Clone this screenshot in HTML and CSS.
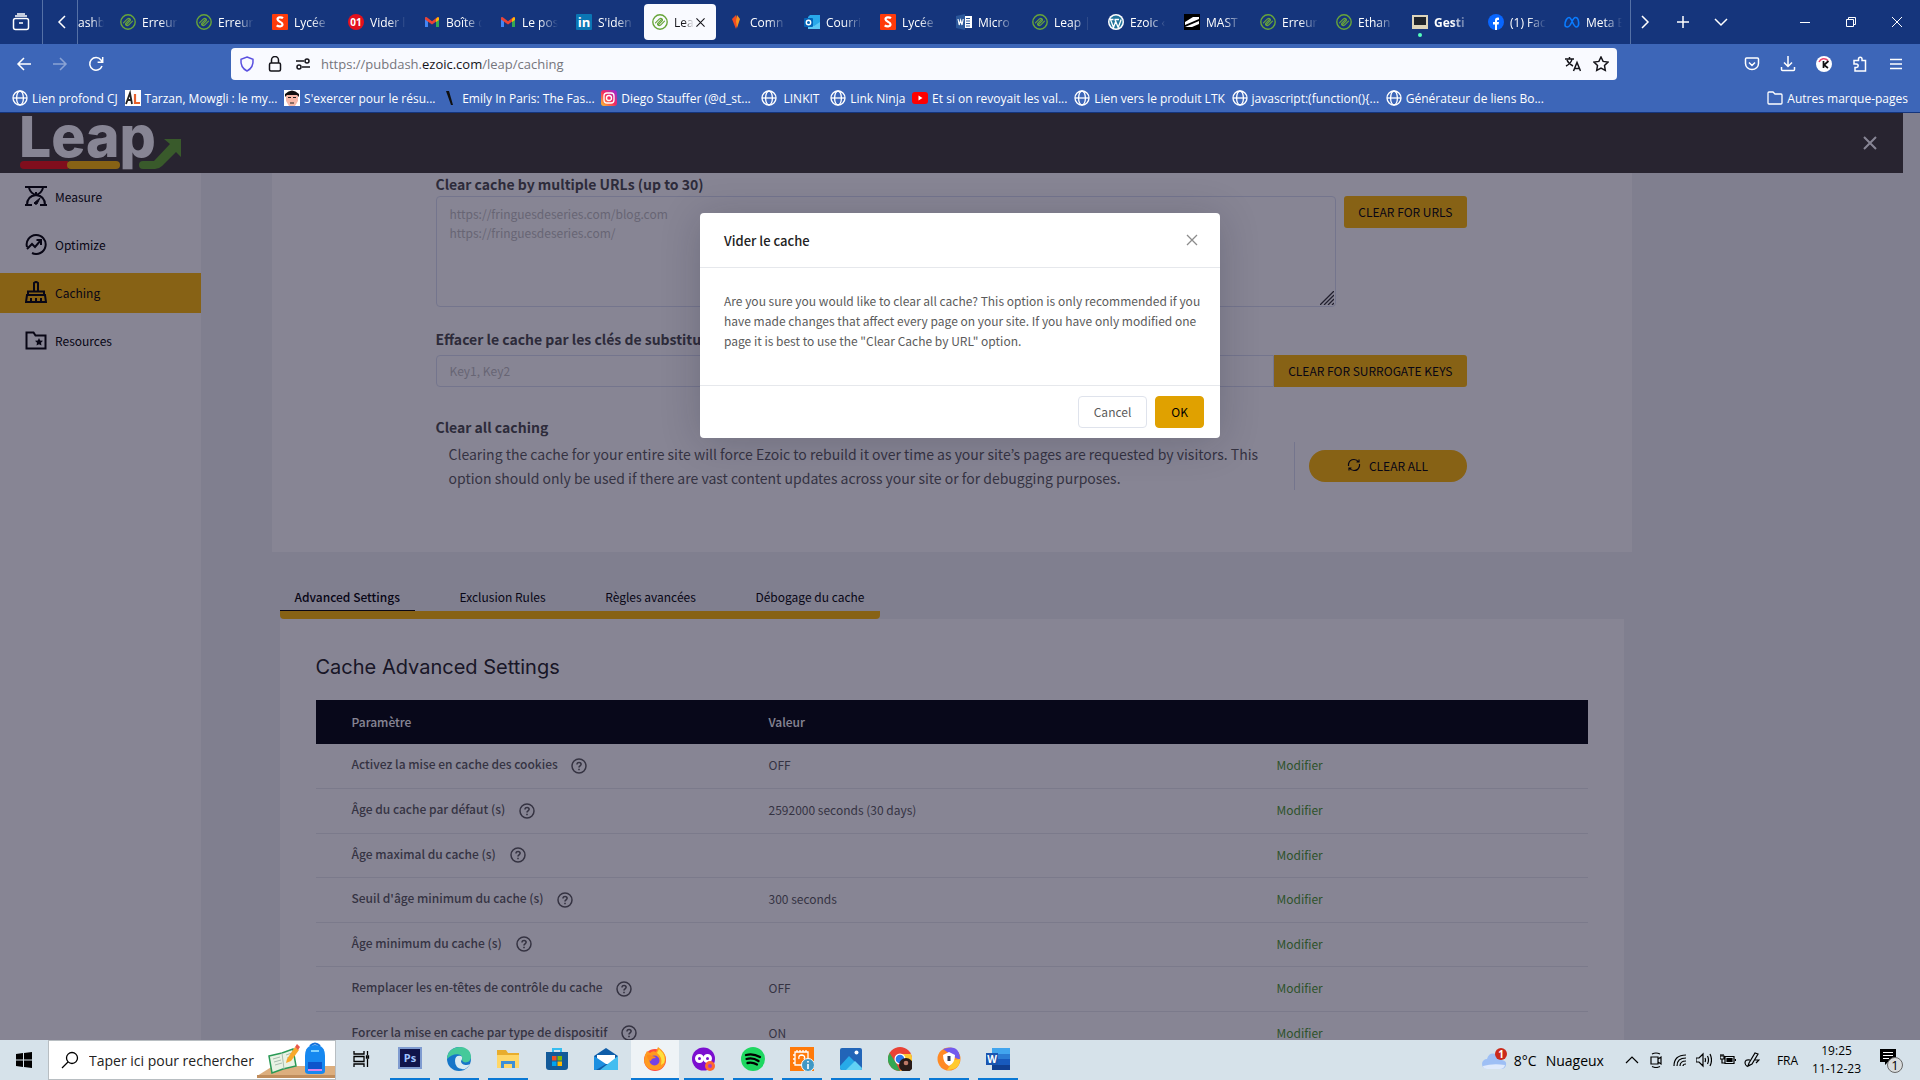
FILE: index.html
```html
<!DOCTYPE html>
<html lang="fr">
<head>
    <meta charset="UTF-8">
    <meta name="viewport" content="width=device-width, initial-scale=1.0">
    <title>Leap | Caching</title>
    <link rel="stylesheet" href="styles.css">
</head>
<body>
    <!-- shared icons -->
    <svg class="sprite" width="0" height="0" aria-hidden="true">
        <symbol id="ezoic" viewBox="0 0 16 16"><g fill="none" stroke="#68a53a" stroke-width="1.400" stroke-linecap="round"><circle cx="8" cy="8" r="7.200"/><path d="M3.500 8.800 7.400 4.900Q8.900 3.800 10 4.900T9.600 7.400L6.400 10.600M12.500 7.200 8.600 11.100Q7.100 12.200 6 11.100T6.400 8.600L9.600 5.400" stroke-width="1.200"/></g></symbol>
        <symbol id="s-red" viewBox="0 0 16 16"><rect width="16" height="16" rx="1" fill="#ff3b0a"/><path d="M11 4.200C9.500 3 5.500 2.800 5.500 5.300c0 2.500 5 2.300 5 5 0 2.600-4 2.500-5.800 1" fill="none" stroke="#fff" stroke-width="2.200"/></symbol>
        <symbol id="gmail" viewBox="0 0 16 16"><path d="M1 3v10h3V7z" fill="#4285f4"/><path d="M15 3v10h-3V7z" fill="#34a853"/><path d="M1 3.500 2.500 3 8 7.200 13.500 3l1.500.5v2L8 10.600 1 5.500z" fill="#ea4335"/><path d="m12 5 2-2 1 1v2l-3 2z" fill="#fbbc04"/></symbol>
        <symbol id="word" viewBox="0 0 16 16"><path d="M7 2h9v12H7z" fill="#fff"/><path d="M10 4.500h4M10 7h4M10 9.500h4M10 12h4" stroke="#2b579a"/><path d="m0 2 9-2v16l-9-2z" fill="#2b579a"/><path d="m2 5 1.200 6 1.400-5L6 11l1.200-6" fill="none" stroke="#fff" stroke-width="1.100"/></symbol>
        <symbol id="globe" viewBox="0 0 16 16"><g fill="none" stroke="#fff" stroke-width="1.300"><circle cx="8" cy="8" r="7"/><ellipse cx="8" cy="8" rx="3.400" ry="7"/><path d="M1 8h14"/></g></symbol>
        <symbol id="help" viewBox="0 0 16 16"><circle cx="8" cy="8" r="7" fill="none" stroke="currentColor" stroke-width="1.500"/><path d="M6 6.400C6 3.800 10.100 4 10.100 6.300 10.100 7.800 8 7.800 8 9.400M8 10.700v1.500" fill="none" stroke="currentColor" stroke-width="1.600"/></symbol>
        <symbol id="cross" viewBox="0 0 16 16"><path d="m3 3 10 10M13 3 3 13" fill="none" stroke="currentColor" stroke-width="1.300"/></symbol>
    </svg>

    <header class="browser">
        <div class="tab-strip">
            <button class="strip-btn first" aria-label="Firefox View"><svg width="18" height="18" viewBox="0 0 18 18" fill="none" stroke="#fff" stroke-width="1.500"><rect x="1.500" y="5.500" width="15" height="11" rx="2"/><path d="M3 3h12M5 1h8M7 10h4"/></svg></button>
            <button class="strip-btn second" aria-label="Précédent"><svg width="16" height="16" viewBox="0 0 16 16" fill="none" stroke="#fff" stroke-width="1.500"><path d="M11 2 5 8l6 6"/></svg></button>
            <div class="tab partial"><span>ashb</span></div>
            <div class="tab"><svg><use href="#ezoic"/></svg><span>Erreur</span></div>
            <div class="tab"><svg><use href="#ezoic"/></svg><span>Erreur</span></div>
            <div class="tab"><svg><use href="#s-red"/></svg><span>Lycée</span></div>
            <div class="tab"><svg viewBox="0 0 16 16"><circle cx="8" cy="8" r="8" fill="#e4101c"/><text x="8" y="12" text-anchor="middle" class="ico-text">01</text></svg><span>Vider l</span></div>
            <div class="tab"><svg><use href="#gmail"/></svg><span>Boîte d</span></div>
            <div class="tab"><svg><use href="#gmail"/></svg><span>Le pos</span></div>
            <div class="tab"><svg viewBox="0 0 16 16"><rect width="16" height="16" rx="1" fill="#0a76b4"/><text x="8" y="13" text-anchor="middle" class="ico-text big">in</text></svg><span>S'iden</span></div>
            <div class="tab active"><svg><use href="#ezoic"/></svg><span>Lea</span><button class="tab-close" aria-label="Fermer l'onglet"><svg width="13" height="13"><use href="#cross"/></svg></button></div>
            <div class="tab"><svg viewBox="0 0 16 16"><path d="M8 1 4 5l4 10 2-6z" fill="#f04a23"/><path d="m9 1 3 4-3 9-1-7z" fill="#f7931e"/></svg><span>Comn</span></div>
            <div class="tab"><svg viewBox="0 0 16 16"><path d="M6 1h10v14H4V3z" fill="#28a8ea"/><path d="m4 10 6 2 6-4v7H4z" fill="#5cc8f5"/><rect y="4" width="9" height="9" rx="1" fill="#0364b8"/><circle cx="4.500" cy="8.500" r="2.200" fill="none" stroke="#fff" stroke-width="1.400"/></svg><span>Courri</span></div>
            <div class="tab"><svg><use href="#s-red"/></svg><span>Lycée</span></div>
            <div class="tab"><svg><use href="#word"/></svg><span>Micro</span></div>
            <div class="tab"><svg><use href="#ezoic"/></svg><span>Leap |</span></div>
            <div class="tab"><svg viewBox="0 0 16 16"><circle cx="8" cy="8" r="8" fill="#fff"/><circle cx="8" cy="8" r="6.500" fill="#21759b"/><path d="m2.500 5.500 3 8 2.200-6-.8-2m.8 2 2.500 6 3-8M2 5.500h3.500m1 0H11" fill="none" stroke="#fff" stroke-width="1.300"/></svg><span>Ezoic ‹</span></div>
            <div class="tab"><svg viewBox="0 0 16 16"><path d="M0 0h16v16H0z" fill="#000"/><path d="M1 8 9 3h6v2L1 11zM1 13l14-6v3L8 13z" fill="#fff"/></svg><span>MAST</span></div>
            <div class="tab"><svg><use href="#ezoic"/></svg><span>Erreur</span></div>
            <div class="tab"><svg><use href="#ezoic"/></svg><span>Ethan</span></div>
            <div class="tab playing"><svg viewBox="0 0 16 16"><path d="M0 1h16v14H0z" fill="#ddd4bb"/><path d="M2 3h12v8H2z" fill="#20242b"/></svg><span>Gesti</span></div>
            <div class="tab"><svg viewBox="0 0 16 16"><circle cx="8" cy="8" r="8" fill="#0866ff"/><path d="M7 16v-5.500H5V8h2V6.500C7 4 8.500 3.300 11 3.700V6c-1.500-.1-2 .1-2 1v1h2l-.4 2.500H9V16z" fill="#fff"/></svg><span>(1) Fac</span></div>
            <div class="tab"><svg viewBox="0 0 16 16"><path d="M1 11C1 7 3 3.500 5 3.500 8 3.500 9 13 12.500 13 16 13 15 3.500 11.500 3.500 8 3.500 7.500 13 3.500 13 2 13 1 12.500 1 11z" fill="none" stroke="#0a7cff" stroke-width="1.600"/></svg><span>Meta E</span></div>
            <div class="strip-end">
                <button aria-label="Onglets suivants"><svg width="16" height="16" viewBox="0 0 16 16"><path d="m5 2 6 6-6 6"/></svg></button>
                <button aria-label="Nouvel onglet"><svg width="16" height="16" viewBox="0 0 16 16"><path d="M8 2v12M2 8h12"/></svg></button>
                <button aria-label="Lister les onglets"><svg width="16" height="16" viewBox="0 0 16 16"><path d="m2 5 6 6 6-6"/></svg></button>
            </div>
            <div class="window-btns">
                <button aria-label="Réduire"><svg width="12" height="12" viewBox="0 0 12 12"><path d="M1 6.500h10"/></svg></button>
                <button aria-label="Restaurer"><svg width="12" height="12" viewBox="0 0 12 12"><path d="M1.500 3.500h7v7h-7zM3.500 3V1.500h7v7H9"/></svg></button>
                <button aria-label="Fermer"><svg width="12" height="12" viewBox="0 0 12 12"><path d="m1 1 10 10M11 1 1 11"/></svg></button>
            </div>
        </div>

        <div class="nav-bar">
            <div class="nav-left">
                <button aria-label="Page précédente"><svg width="16" height="16" viewBox="0 0 16 16"><path d="M15 8H2m6-6L2 8l6 6"/></svg></button>
                <button class="disabled" aria-label="Page suivante"><svg width="16" height="16" viewBox="0 0 16 16"><path d="M1 8h13M8 2l6 6-6 6"/></svg></button>
                <button aria-label="Actualiser"><svg width="16" height="16" viewBox="0 0 16 16"><path d="M14 10a6.300 6.300 0 1 1-1-6l1.500 2M14.700 1v5.200H9.600"/></svg></button>
            </div>
            <div class="url-bar">
                <svg width="16" height="16" viewBox="0 0 16 16" stroke="#5a50e0"><path d="M8 1 14 3.300c.5 5-1.500 9.500-6 11.700-4.500-2.200-6.500-6.700-6-11.700z"/></svg>
                <svg width="16" height="16" viewBox="0 0 16 16"><rect x="2.500" y="7" width="11" height="8" rx="1.500"/><path d="M4.500 7V4a3.500 3.500 0 0 1 7 0v3"/></svg>
                <svg width="16" height="16" viewBox="0 0 16 16"><circle cx="12" cy="5" r="2"/><path d="M1 5h8M7 11h8"/><circle cx="4" cy="11" r="2"/></svg>
                <div class="url">https://pubdash.<b>ezoic.com</b>/leap/caching</div>
                <button aria-label="Traduire la page"><svg width="16" height="16" viewBox="0 0 16 16"><path d="M0 3h9M4.500 1v2M7 3c-.5 3-3 5.500-6 7M2 4c1 2.500 3 4.500 6 6M8.500 15 12 6.500 15.500 15M9.700 12.500h4.600"/></svg></button>
                <button aria-label="Ajouter aux favoris"><svg width="16" height="16" viewBox="0 0 16 16"><path d="m8 1 2.100 4.400 4.900.7-3.500 3.400.8 4.900L8 12.100l-4.300 2.300.8-4.900L1 6.100l4.900-.7z"/></svg></button>
            </div>
            <div class="nav-right">
                <button aria-label="Pocket"><svg width="16" height="16" viewBox="0 0 16 16"><path d="M2.500 2h11q1 0 1 1v4.500a6.500 6 0 0 1-13 0V3q0-1 1-1zM5 6.500l3 3 3-3"/></svg></button>
                <button aria-label="Téléchargements"><svg width="16" height="16" viewBox="0 0 16 16"><path d="M8 0v10M4 6.500l4 4 4-4M1.500 11v2.500q0 1 1 1h11q1 0 1-1V11"/></svg></button>
                <button aria-label="Extension K"><svg width="16" height="16" viewBox="0 0 16 16"><circle cx="8" cy="8" r="8" fill="#fff" stroke="none"/><path d="M3 6c1.500-3.500 6-4.500 9-1.500" stroke="#ef476f"/><path d="M7.500 5v7M12.500 5 8 9l4 3" stroke="#111" stroke-width="1.700"/></svg></button>
                <button aria-label="Extensions"><svg width="16" height="16" viewBox="0 0 16 16"><path d="M5 4.500h1.500V3a1.700 1.700 0 0 1 3.500 0v1.500h3.500V15H3v-3.500h1.500a1.700 1.700 0 0 0 0-3.400H2V4.500z"/></svg></button>
                <button aria-label="Menu"><svg width="16" height="16" viewBox="0 0 16 16"><path d="M2 3.500h12M2 8h12M2 12.500h12"/></svg></button>
            </div>
        </div>

        <nav class="bookmarks">
            <div class="bookmark-list">
                <a href="#"><svg><use href="#globe"/></svg>Lien profond CJ</a>
                <a href="#"><svg viewBox="0 0 16 16"><path d="M0 0h16v16H0z" fill="#fff"/><path d="m1 14 4-11 2 11M2.500 10H7" fill="none" stroke="#222" stroke-width="1.800"/><path d="M10 4v9h5" fill="none" stroke="#e8622c" stroke-width="2.200"/></svg>Tarzan, Mowgli : le my...</a>
                <a href="#"><svg viewBox="0 0 16 16"><path d="M0 0h16v16H0z" fill="#fff"/><path d="M2 4h12v7l-3 5H5l-3-5z" fill="#f5b8a8"/><path d="M1 4Q8-3 15 4v3l-2-2H3L1 7z" fill="#111"/><path d="M4 7.500h3m2 0h3M6 13h4" stroke="#222"/></svg>S'exercer pour le résu...</a>
                <a href="#"><svg viewBox="0 0 16 16"><path d="M4 1h3l4 14H9z" fill="#101010"/></svg>Emily In Paris: The Fas...</a>
                <a href="#"><svg viewBox="0 0 16 16"><defs><linearGradient id="ig" x1="0" y1="1" x2="1" y2="0"><stop offset="0" stop-color="#fdc52c"/><stop offset=".5" stop-color="#f5285f"/><stop offset="1" stop-color="#8a2be2"/></linearGradient></defs><rect width="16" height="16" rx="3" fill="url(#ig)"/><g fill="none" stroke="#fff" stroke-width="1.300"><rect x="3" y="3" width="10" height="10" rx="3"/><circle cx="8" cy="8" r="2.500"/></g></svg>Diego Stauffer (@d_st...</a>
                <a href="#" class="short"><svg><use href="#globe"/></svg>LINKIT</a>
                <a href="#"><svg><use href="#globe"/></svg>Link Ninja</a>
                <a href="#"><svg viewBox="0 0 16 16"><rect y="2" width="16" height="12" rx="3" fill="#f00"/><path d="m6.500 5.500 4 2.500-4 2.500z" fill="#fff"/></svg>Et si on revoyait les val...</a>
                <a href="#"><svg><use href="#globe"/></svg>Lien vers le produit LTK</a>
                <a href="#"><svg><use href="#globe"/></svg>javascript:(function(){...</a>
                <a href="#"><svg><use href="#globe"/></svg>Générateur de liens Bo...</a>
            </div>
            <a href="#"><svg viewBox="0 0 16 16"><path d="M1 13V3q0-1 1-1h4l2 2h6q1 0 1 1v8q0 1-1 1H2q-1 0-1-1z" fill="none" stroke="#fff" stroke-width="1.300"/></svg>Autres marque-pages</a>
        </nav>
    </header>

    <div class="viewport">
        <div class="leap-header">
            <svg class="logo" width="164" height="58" viewBox="0 0 164 58" role="img" aria-label="Leap">
                <text x="-1" y="43" class="logo-text">Leap</text>
                <path d="M4 47h44v8H4a4 4 0 0 1 0-8z" fill="#f01010"/>
                <rect x="47" y="47" width="53" height="8" rx="4" fill="#ffb800"/>
                <path d="M123 47h11l16-17-6-5h17v18l-5-5-14 14q-3 3-7 3h-12a4 4 0 0 1 0-8z" fill="#62a82c"/>
            </svg>
            <button class="leap-close" aria-label="Fermer"><svg width="20" height="20" viewBox="0 0 20 20"><path d="m4 4 12 12M16 4 4 16" stroke="#fff" stroke-width="2"/></svg></button>
        </div>

        <div class="layout">
            <nav class="sidebar">
                <a href="#"><svg width="22" height="22" viewBox="0 0 22 22"><path d="M0 2h22M0 20h7m8 0h7M4 3q2 6 7 7 5-1 7-7M2 20q0-9 9-10 9 1 9 10M11 10V7"/><path d="m9 18 6-5-3 6q-2 1-3-1z" fill="#000" stroke-width="1"/></svg>Measure</a>
                <a href="#"><svg width="22" height="22" viewBox="0 0 22 22"><path d="M2 14a9.500 9.500 0 1 1 5 6M2 16l5-5 3 3 6-7M11.500 7H16v5"/></svg>Optimize</a>
                <a href="#" class="current"><svg width="22" height="22" viewBox="0 0 22 22"><path d="M9 10V2q2-2 4 0v8M3 14v-3.500h16V14M2 14h18l1 7H1zM6 21v-4m5 4v-4m5 4v-4"/></svg>Caching</a>
                <a href="#"><svg width="22" height="22" viewBox="0 0 22 22"><path d="M1.500 3.500h7l2 3h10v13h-19z"/><path d="m14 9 1.200 2.500 2.800.3-2 1.900.5 2.800-2.500-1.300-2.500 1.300.5-2.800-2-1.900 2.800-.3z" fill="#000" stroke="none"/></svg>Resources</a>
            </nav>

            <main class="content">
                <section class="card cache-card">
                    <label class="field-title" for="urls">Clear cache by multiple URLs (up to 30)</label>
                    <div class="url-row">
                        <div class="textarea-wrap">
                            <textarea id="urls" placeholder="https://fringuesdeseries.com/blog.com&#10;https://fringuesdeseries.com/"></textarea>
                            <svg class="grip" width="14" height="14" viewBox="0 0 14 14"><path d="M0 14 14 0M4 14 14 4M8 14l6-6M12 14l2-2" stroke="#333" fill="none" stroke-width="1.300"/></svg>
                        </div>
                        <button class="btn">CLEAR FOR URLS</button>
                    </div>
                    <label class="field-title" for="keys">Effacer le cache par les clés de substitution</label>
                    <div class="key-row">
                        <input type="text" id="keys" placeholder="Key1, Key2">
                        <button class="btn">CLEAR FOR SURROGATE KEYS</button>
                    </div>
                    <h2 class="field-title">Clear all caching</h2>
                    <div class="all-row">
                        <p>Clearing the cache for your entire site will force Ezoic to rebuild it over time as your site’s pages are requested by visitors. This option should only be used if there are vast content updates across your site or for debugging purposes.</p>
                        <button class="btn round"><svg width="14" height="14" viewBox="0 0 14 14" fill="none" stroke="#000" stroke-width="1.200"><path d="M1.500 8V6q1-4.500 5.500-4.500 3 0 4.500 2.500M12.500 6v2q-1 4.500-5.500 4.500-3 0-4.500-2.500M12 1.500V4H9.500M2 12.500V10h2.500"/></svg>CLEAR ALL</button>
                    </div>
                </section>

                <section class="settings">
                    <div class="tabs">
                        <button class="selected">Advanced Settings</button>
                        <button>Exclusion Rules</button>
                        <button>Règles avancées</button>
                        <button>Débogage du cache</button>
                    </div>
                    <div class="card table-card">
                        <h1>Cache Advanced Settings</h1>
                        <table>
                            <thead>
                                <tr><th>Paramètre</th><th>Valeur</th><th></th></tr>
                            </thead>
                            <tbody>
                                <tr><th>Activez la mise en cache des cookies <svg><use href="#help"/></svg></th><td>OFF</td><td><a href="#">Modifier</a></td></tr>
                                <tr><th>Âge du cache par défaut (s) <svg><use href="#help"/></svg></th><td>2592000 seconds (30 days)</td><td><a href="#">Modifier</a></td></tr>
                                <tr><th>Âge maximal du cache (s) <svg><use href="#help"/></svg></th><td></td><td><a href="#">Modifier</a></td></tr>
                                <tr><th>Seuil d'âge minimum du cache (s) <svg><use href="#help"/></svg></th><td>300 seconds</td><td><a href="#">Modifier</a></td></tr>
                                <tr><th>Âge minimum du cache (s) <svg><use href="#help"/></svg></th><td></td><td><a href="#">Modifier</a></td></tr>
                                <tr><th>Remplacer les en-têtes de contrôle du cache <svg><use href="#help"/></svg></th><td>OFF</td><td><a href="#">Modifier</a></td></tr>
                                <tr><th>Forcer la mise en cache par type de dispositif <svg><use href="#help"/></svg></th><td>ON</td><td><a href="#">Modifier</a></td></tr>
                            </tbody>
                        </table>
                    </div>
                </section>
            </main>
        </div>

        <div class="modal-mask">
            <div class="modal" role="dialog" aria-labelledby="modalTitle">
                <div class="modal-header">
                    <h3 id="modalTitle">Vider le cache</h3>
                    <button aria-label="Fermer"><svg width="16" height="16"><use href="#cross"/></svg></button>
                </div>
                <div class="modal-body">Are you sure you would like to clear all cache? This option is only recommended if you have made changes that affect every page on your site. If you have only modified one page it is best to use the "Clear Cache by URL" option.</div>
                <div class="modal-footer">
                    <button class="cancel">Cancel</button>
                    <button class="ok">OK</button>
                </div>
            </div>
        </div>
    </div>

    <footer class="taskbar">
        <button class="start" aria-label="Démarrer"><svg width="16" height="16" viewBox="0 0 16 16"><path d="m0 2 7-1v6.500H0zM8 1l8-1v7.500H8zM0 8.500h7V15l-7-1zM8 8.500h8V16l-8-1z"/></svg></button>
        <div class="search">
            <svg width="18" height="18" viewBox="0 0 18 18" fill="none" stroke="#000" stroke-width="1.300"><circle cx="11" cy="7" r="5.500"/><path d="m7 11-6 6"/></svg>
            <input type="text" aria-label="Rechercher" placeholder="Taper ici pour rechercher">
            <svg class="doodle" width="78" height="36" viewBox="0 0 78 36"><path d="m0 34 16-10h62v12H0z" fill="#dcae7e"/><path d="M0 33h78v3H0z" fill="#c08d5c"/><path d="m12 14 13-3 11-4 3 17-13 3-11 4z" fill="#e9f2e4" stroke="#2a9a56" stroke-width="1.500"/><path d="m25 11 2 16M16 17l7-2m-6 5 7-2m-6 5 7-2m4-8 6-2m-5 5 6-2" stroke="#a9bdb0" fill="none"/><path d="m30 17 8-12 4 3-8 11-5 2z" fill="#f8a92c"/><path d="m38 5 2-3 3 3-2 3z" fill="#e8584a"/><path d="M53 4q5-5 10 0" fill="none" stroke="#1570d8" stroke-width="2"/><path d="M48 14q0-11 10-11t10 11v15q0 3-4 3H52q-4 0-4-3z" fill="#1688f0"/><path d="M51 20h14v9H51z" fill="#0d55cc"/><path d="M54 9h8" stroke="#7fd0ff" stroke-width="2"/><path d="M51 28h14" stroke="#d784ee" stroke-width="2"/></svg>
        </div>
        <div class="apps">
            <button aria-label="Affichage des tâches"><svg viewBox="0 0 24 24"><path d="M5 4v3h10V4M5 20v-3h10v3M5 9.500h10v5H5zM18.500 4v4m0 4v8M17.500 9h2v2h-2z" fill="none" stroke="#000" stroke-width="1.300"/></svg></button>
            <button class="open" aria-label="Photoshop"><svg viewBox="0 0 24 24"><path d="M1 1h22v20H1z" fill="#10144b" stroke="#7f9bd0" stroke-width="2"/><text x="12" y="15" text-anchor="middle" class="ico-text ps">Ps</text></svg></button>
            <button class="open" aria-label="Edge"><svg viewBox="0 0 24 24"><circle cx="12" cy="12" r="12" fill="#1676c8"/><path d="M0 12C0-3 24-4 24 10c0 6-8 7-9 3 2-7-9-8-15-1z" fill="#45c99a"/><path d="M8 14q0-6 6-5c2 1 1 4 0 5 0 4 6 5 9 3-2 4-6 6-8 5q-7-1-7-8z" fill="#d8eaf2"/></svg></button>
            <button class="open" aria-label="Explorateur"><svg viewBox="0 0 24 24"><path d="M1 3h9l2 3h11v15H1z" fill="#e8ad2e"/><path d="M1 8h22v13H1z" fill="#ffd768"/><path d="M5 21v-7h14v7h-3v-4H8v4z" fill="#3d8fd8"/></svg></button>
            <button aria-label="Microsoft Store"><svg viewBox="0 0 24 24"><path d="M8 6V2h8v4" fill="none" stroke="#35bdf0" stroke-width="2"/><path d="M1 5h22v15q0 3-3 3H4q-3 0-3-3z" fill="#135a99"/><path d="M7 9h4.500v4.500H7z" fill="#f25022"/><path d="M12.500 9H17v4.500h-4.500z" fill="#7fba00"/><path d="M7 14.500h4.500V19H7z" fill="#00a4ef"/><path d="M12.500 14.500H17V19h-4.500z" fill="#ffb900"/></svg></button>
            <button aria-label="Courrier"><svg viewBox="0 0 24 24"><path d="M0 9 12 1l12 8v14H0z" fill="#0f5da8"/><path d="M3 8h18v9H3z" fill="#fff"/><path d="m0 9 12 8-10 6H0z" fill="#1c8fe0"/><path d="m24 9-18 14h18z" fill="#42bdf0"/></svg></button>
            <button class="open focused" aria-label="Firefox"><svg viewBox="0 0 24 24"><circle cx="12" cy="13" r="11" fill="#ff4a3d"/><path d="M2 8 4 4l3 2q3-3 6-1l2-5q10 7 7 16-2 6-8 7-11 1-13-9z" fill="#ff9a20"/><path d="M16 2q8 7 5 14l-3 2q2-8-4-12z" fill="#ffdf3e"/><circle cx="11.500" cy="13.500" r="5" fill="#7542e5"/><path d="M4 8q3-1 5 1 3 0 4 2-5 0-5 3-4-1-4-6z" fill="#ff8a1c"/></svg></button>
            <button class="open" aria-label="Firefox privé"><svg viewBox="0 0 24 24"><circle cx="11.500" cy="12" r="11.500" fill="#7c0fd0"/><circle cx="7.500" cy="11.500" r="3" fill="none" stroke="#fff" stroke-width="3"/><circle cx="15.500" cy="11.500" r="3" fill="none" stroke="#fff" stroke-width="3"/><circle cx="18" cy="19" r="5" fill="#ff6a2e"/><circle cx="18" cy="19" r="2" fill="#a63bd0"/></svg></button>
            <button class="open" aria-label="Spotify"><svg viewBox="0 0 24 24"><circle cx="12" cy="12" r="12" fill="#1ed760"/><path d="M5 8q7-2 14 2M5.500 12q6-2 12 2M6.500 16q5-1 9.500 1.500" fill="none" stroke="#000" stroke-width="2.300" stroke-linecap="round"/></svg></button>
            <button class="open" aria-label="Informations système"><svg viewBox="0 0 24 24"><path d="M0 0h24v24H0z" fill="#ff7a0a"/><path d="M5 5h13v13H5zM7 3v2m3-2v2m3-2v2m3-2v2M3 8h2m-2 4h2m-2 4h2M9 12q-1-4 3-4 4 1 2 4" fill="none" stroke="#fff" stroke-width="1.300"/><circle cx="18" cy="18" r="6.500" fill="#4098c4" stroke="#fff"/><path d="M18 14v1.500m0 1.500v5" stroke="#fff" stroke-width="1.600"/></svg></button>
            <button class="open" aria-label="Photos"><svg viewBox="0 0 24 24"><rect x="1" y="1" width="22" height="22" rx="2" fill="#2265b8"/><path d="m1 19 9-10 13 13q-1 1-2 1H3q-2 0-2-2z" fill="#27aae8"/><path d="m7 23 9-9 7 7q0 2-2 2z" fill="#62d2f5"/><circle cx="17.500" cy="5.500" r="2" fill="#fff"/></svg></button>
            <button class="open" aria-label="Chrome"><svg viewBox="0 0 24 24"><circle cx="12" cy="12" r="12" fill="#e94235"/><path d="M1.600 6 8 16l4 8A12 12 0 0 1 1.600 6z" fill="#33a852"/><path d="M12 7h11a12 12 0 0 1-11 17l5-9z" fill="#fcc934"/><circle cx="12" cy="12" r="5.500" fill="#fff"/><circle cx="12" cy="12" r="4.300" fill="#2a78ea"/><circle cx="18" cy="18" r="7" fill="#281b18"/><circle cx="18" cy="16" r="2.300" fill="#bd7966"/></svg></button>
            <button class="open" aria-label="Avast Secure Browser"><svg viewBox="0 0 24 24"><circle cx="12" cy="12" r="11.500" fill="#ff8a24"/><path d="M6 2q17-6 17 11l-6-3z" fill="#7359ee"/><path d="M23 12q0 11-13 11l7-10z" fill="#ffca2e"/><path d="m12 5 6 3q0 8-6 11-6-3-6-11z" fill="#fff"/><path d="M12 9v5" stroke="#333c55" stroke-width="3"/></svg></button>
            <button class="open" aria-label="Word"><svg viewBox="0 0 24 24"><path d="M6 1h18v22H6z" fill="#185abd"/><path d="M6 1h18v6H6z" fill="#41a5ee"/><path d="M6 7h18v5H6z" fill="#2b7cd3"/><path d="M6 18h18v5H6z" fill="#103f91"/><path d="M0 6h12v12H0z" fill="#1a55b0"/><text x="6" y="16" text-anchor="middle" class="ico-text w">W</text></svg></button>
        </div>
        <div class="tray">
            <svg class="weather" width="28" height="24" viewBox="0 0 28 24"><path d="M5 21a5 5 0 0 1 0-10q2-7 9-5 5 1 6 6 5 1 4 5-1 4-5 4z" fill="#9ebff5"/><path d="M5 21q-4 0-4-3 10-3 22-1-1 4-5 4z" fill="#dfeafc"/><circle cx="19" cy="6" r="6" fill="#cb2a1b"/><text x="19" y="10" text-anchor="middle" class="ico-text badge">1</text></svg>
            <span class="temp">8°C</span>
            <span class="sky">Nuageux</span>
            <div class="tray-icons">
                <svg viewBox="0 0 16 16"><path d="m2 11 6-6 6 6"/></svg>
                <svg viewBox="0 0 16 16"><path d="M3 5h7v7H3zM10 7l3-2v7l-3-2M4 2q4-2 8 0M4 14.500q4 2 8 0"/></svg>
                <svg viewBox="0 0 16 16"><path d="M2 14Q2 3 14 3M5 14q0-8 9-8M8 14q0-5 6-5M11 14q0-2 3-2"/></svg>
                <svg viewBox="0 0 16 16"><path d="M0 6h3l4-4v12l-4-4H0zM9 6q1 2 0 4M11.500 4q2 4 0 8M14 2q3 6 0 12"/></svg>
                <svg viewBox="0 0 16 16"><path d="M5 4.500h9v7H5zM15.500 7v2M0 4h4v3H0zM1 2v2m2-2v2M2 7v4h3"/><path d="M7 6.500h5v3H7z" fill="#000"/></svg>
                <svg viewBox="0 0 16 16"><path d="M5 11 11 1l3 1-6 10-4 2zM6 8q-5-1-5 3 1 5 5 2M10 8h5l-3 3"/></svg>
            </div>
            <span class="lang">FRA</span>
            <div class="clock"><span>19:25</span><span>11-12-23</span></div>
            <svg class="notif" width="26" height="26" viewBox="0 0 26 26"><path d="M1 2h16v13H9l-3 3v-3H1z" fill="#000"/><path d="M4 5.500h10M4 8.500h10M4 11.500h6" stroke="#fff"/><circle cx="16" cy="18" r="7.500" fill="#d9dcdd" stroke="#666"/><text x="16" y="23" text-anchor="middle" class="notif-text">1</text></svg>
        </div>
    </footer>
</body>
</html>
```
FILE: styles.css
```css
* {
    box-sizing: border-box;
}
body {
    margin: 0;
    height: 100vh;
    display: flex;
    flex-direction: column;
    overflow: hidden;
    font-family: "Noto Sans CJK KR", "Noto Sans", sans-serif;
    font-size: 12px;
    color: #5b5b5b;
}
button {
    font: inherit;
    color: inherit;
    background: none;
    border: none;
    padding: 0;
    display: flex;
    align-items: center;
    justify-content: center;
}
a {
    text-decoration: none;
}
svg {
    flex: none;
}
.sprite {
    position: absolute;
}
.ico-text {
    font-family: "Open Sans", sans-serif;
    font-size: 10px;
    font-weight: 700;
    fill: #fff;
}
.ico-text.big {
    font-size: 13px;
}
.ico-text.ps {
    font-size: 11px;
    fill: #9fc3ff;
}

/* Browser */
.browser {
    flex: none;
    font-family: "Open Sans", sans-serif;
    font-size: 12px;
    color: #fff;
    background: #3d66b8;
    border-bottom: 1px solid #15357c;
}
.tab-strip {
    display: flex;
    height: 44px;
    background: #15357c;
}
.strip-btn {
    border-right: 1px solid #5571a6;
}
.strip-btn.first {
    width: 43px;
}
.strip-btn.second {
    width: 35px;
    padding-left: 4px;
}
.tab {
    width: 76px;
    height: 36px;
    margin: 4px 0;
    padding-left: 10px;
    display: flex;
    align-items: center;
    position: relative;
}
.tab > svg {
    width: 16px;
    height: 16px;
}
.tab span {
    width: 36px;
    margin-left: 6px;
    overflow: hidden;
    white-space: nowrap;
    -webkit-mask-image: linear-gradient(90deg, #000 50%, transparent);
    mask-image: linear-gradient(90deg, #000 50%, transparent);
}
.tab.partial {
    width: 32px;
    padding: 0;
}
.tab.partial span {
    width: 26px;
    margin: 0;
}
.tab.active {
    width: 72px;
    margin: 4px 2px;
    padding-left: 8px;
    color: #15141a;
    background: #f9faff;
    border-radius: 4px;
}
.tab.active span {
    width: 20px;
}
.tab.playing {
    font-weight: 700;
}
.tab.playing::after {
    content: "";
    position: absolute;
    left: 16px;
    bottom: 3px;
    width: 4px;
    height: 4px;
    border-radius: 50%;
    background: #54ffbd;
}
.strip-end {
    display: flex;
    flex: 1;
    border-left: 1px solid #5571a6;
    padding-left: 6px;
    gap: 22px;
}
.strip-end svg, .window-btns svg, .nav-left svg, .nav-right svg {
    fill: none;
    stroke: #fff;
    stroke-width: 1.5;
}
.window-btns {
    display: flex;
    gap: 34px;
    padding-right: 17px;
}
.window-btns svg {
    stroke-width: 1;
}
.nav-bar {
    display: flex;
    height: 40px;
    align-items: center;
    justify-content: space-between;
    padding: 0 16px;
}
.nav-left, .nav-right {
    display: flex;
    gap: 20px;
}
.nav-left {
    width: 215px;
}
.nav-right {
    width: 287px;
    justify-content: flex-end;
}
.disabled {
    opacity: 0.4;
}
.url-bar {
    flex: 1;
    height: 32px;
    display: flex;
    align-items: center;
    gap: 12px;
    padding: 0 8px;
    border-radius: 4px;
    background: #f9faff;
}
.url-bar svg {
    fill: none;
    stroke-width: 1.5;
}
.url-bar svg:not([stroke]) {
    stroke: #15141a;
}
.url {
    flex: 1;
    margin-left: -2px;
    font-size: 13px;
    color: #75757c;
}
.url b {
    font-weight: 400;
    color: #15141a;
}
.bookmarks {
    display: flex;
    height: 28px;
    align-items: center;
    justify-content: space-between;
    padding: 0 12px;
}
.bookmark-list {
    display: flex;
    flex: 1;
    max-width: 1532px;
    justify-content: space-between;
}
.bookmarks a {
    display: flex;
    align-items: center;
    gap: 4px;
    color: #fff;
    white-space: nowrap;
}
.bookmarks svg {
    width: 16px;
    height: 16px;
}
.bookmarks .short {
    gap: 6px;
    padding: 0 4px;
}

/* Page */
.viewport {
    flex: 1;
    min-height: 0;
    display: flex;
    flex-direction: column;
    position: relative;
    overflow: hidden;
    padding-right: 17px;
    background: #f0f2f5;
}
.leap-header {
    flex: none;
    height: 60px;
    display: flex;
    align-items: center;
    justify-content: space-between;
    padding: 0 23px 0 20px;
    background: #403c37;
    color: #fff;
}
.logo-text {
    font-family: Inter, sans-serif;
    font-size: 57px;
    font-weight: 800;
    fill: #fff;
}
.layout {
    flex: 1;
    display: grid;
    grid-template-columns: 1fr minmax(0, 1360px) 1fr;
}
.sidebar {
    width: 201px;
    padding-top: 4px;
    background: #fff;
}
.sidebar a {
    display: flex;
    align-items: center;
    gap: 8px;
    height: 40px;
    margin-bottom: 8px;
    padding: 0 0 2px 25px;
    color: #000;
}
.sidebar svg {
    fill: none;
    stroke: #000;
    stroke-width: 2;
}
.sidebar .current {
    background: #ffb800;
}
.card {
    background: #fff;
}
.cache-card {
    height: 379px;
    padding: 0 165px 0 164px;
}
.field-title {
    display: block;
    margin: 0 0 1px;
    font-size: 14px;
    line-height: 22px;
    font-weight: 600;
    color: #4b4b4b;
}
.url-row {
    display: flex;
    align-items: flex-start;
    gap: 8px;
    margin-bottom: 20px;
}
.textarea-wrap {
    flex: 1;
    height: 112px;
    position: relative;
}
textarea, .key-row input {
    display: block;
    width: 100%;
    font: inherit;
    border: 1px solid #d9dff0;
    border-radius: 4px;
    background: #fff;
}
textarea {
    height: 111px;
    padding: 7px 13px;
    line-height: 19px;
    resize: none;
}
textarea::placeholder, .key-row input::placeholder {
    color: #bfbfbf;
}
.grip {
    position: absolute;
    right: 2px;
    bottom: 3px;
}
.btn {
    height: 32px;
    padding: 0 14px 2px;
    border-radius: 3px;
    background: #ffb800;
    color: #000;
    white-space: nowrap;
}
.key-row {
    display: flex;
    margin: 5px 0 29px;
}
.key-row input {
    flex: 1;
    height: 32px;
    padding: 0 13px 2px;
    border-radius: 4px 0 0 4px;
}
.key-row .btn {
    border-radius: 0 3px 3px 0;
}
.all-row {
    display: flex;
    align-items: center;
    margin-top: 4px;
}
.all-row p {
    flex: 1;
    margin: 0;
    padding: 0 16px 0 13px;
    font-size: 14px;
    line-height: 24px;
    border-right: 1px solid #d9dff0;
}
.btn.round {
    width: 158px;
    margin-left: 14px;
    gap: 8px;
    border-radius: 16px;
}
.settings {
    margin: 31px 8px 0;
}
.tabs {
    display: flex;
    justify-content: space-between;
    width: 600px;
    border-bottom: 8px solid #ffb800;
    border-radius: 4px;
}
.tabs button {
    height: 28px;
    padding: 0 15px;
    border-bottom: 1px solid transparent;
    color: #000;
}
.tabs .selected {
    font-weight: 500;
    border-bottom-color: #000;
}
.table-card {
    padding: 32px 36px;
}
h1 {
    margin: 0 0 17px;
    font-family: Inter, sans-serif;
    font-size: 20px;
    line-height: 32px;
    font-weight: 400;
    color: #222;
}
table {
    width: 100%;
    table-layout: fixed;
    border-collapse: collapse;
    text-align: left;
}
th, td {
    height: 44px;
    padding: 0 0 2px 36px;
}
th:first-child {
    width: 417px;
    font-weight: 500;
}
th:nth-child(2) {
    width: 508px;
    font-weight: 500;
}
tbody tr:nth-child(even) th {
    height: 45px;
}
thead {
    background: #00040a;
    color: #fff;
}
tbody tr {
    border-bottom: 1px solid #e6e8ec;
}
tbody svg {
    width: 16px;
    height: 16px;
    margin-left: 11px;
    vertical-align: middle;
}
td a {
    color: #4c9a2a;
}

/* Modal */
.modal-mask {
    position: absolute;
    inset: 0;
    padding-top: 100px;
    background: rgba(16, 12, 41, 0.5);
}
.modal {
    width: 520px;
    margin: 0 auto;
    border-radius: 4px;
    background: #fff;
    box-shadow: 0 4px 40px rgba(20, 18, 40, 0.2);
}
.modal-header {
    display: flex;
    align-items: center;
    justify-content: space-between;
    height: 55px;
    padding: 0 20px 0 24px;
    border-bottom: 1px solid #e6e8ec;
    color: #8c8c8c;
}
h3 {
    margin: 0;
    font-size: 13px;
    font-weight: 500;
    color: #222;
}
.modal-body {
    padding: 23px 12px 34px 24px;
    line-height: 20px;
}
.modal-footer {
    display: flex;
    justify-content: flex-end;
    gap: 8px;
    padding: 10px 16px;
    border-top: 1px solid #e6e8ec;
}
.modal-footer button {
    height: 32px;
    padding: 0 15px 2px;
    border: 1px solid #dfe3ec;
    border-radius: 4px;
}
.modal-footer .ok {
    border-color: #e0a100;
    background: #e0a100;
    color: #000;
}

/* Taskbar */
.taskbar {
    flex: none;
    display: flex;
    height: 40px;
    background: #d6e2ea;
    color: #000;
    font-family: "Open Sans", sans-serif;
}
.start {
    width: 48px;
}
.search {
    display: flex;
    align-items: center;
    width: 288px;
    padding-left: 12px;
    border: 1px solid #b8bec2;
    background: #fff;
}
.search input {
    flex: 1;
    min-width: 0;
    padding: 0 0 0 10px;
    border: none;
    font: inherit;
    font-size: 14px;
}
.search input::placeholder {
    color: #222;
}
.apps {
    display: flex;
    gap: 1px;
    padding-left: 1px;
}
.apps button {
    width: 48px;
    border-bottom: 2px solid transparent;
}
.apps svg {
    width: 24px;
    height: 24px;
}
.apps .open {
    background: linear-gradient(#0a78d4, #0a78d4) center bottom / 40px 2px no-repeat border-box;
}
.apps .focused {
    background-color: #eef3f6;
    background-size: 48px 2px;
}
.tray {
    display: flex;
    align-items: center;
    margin-left: auto;
    padding-right: 15px;
    font-size: 14px;
}
.temp {
    margin: 0 9px 0 4px;
}
.tray-icons {
    display: flex;
    gap: 8px;
    margin: 0 17px 0 20px;
}
.tray-icons svg {
    width: 16px;
    height: 16px;
    fill: none;
    stroke: #000;
    stroke-width: 1.2;
}
.lang, .clock {
    font-size: 12px;
}
.clock {
    display: flex;
    flex-direction: column;
    align-items: center;
    line-height: 18px;
    margin: 0 18px 0 14px;
}
.notif-text {
    font-size: 13px;
}
```
